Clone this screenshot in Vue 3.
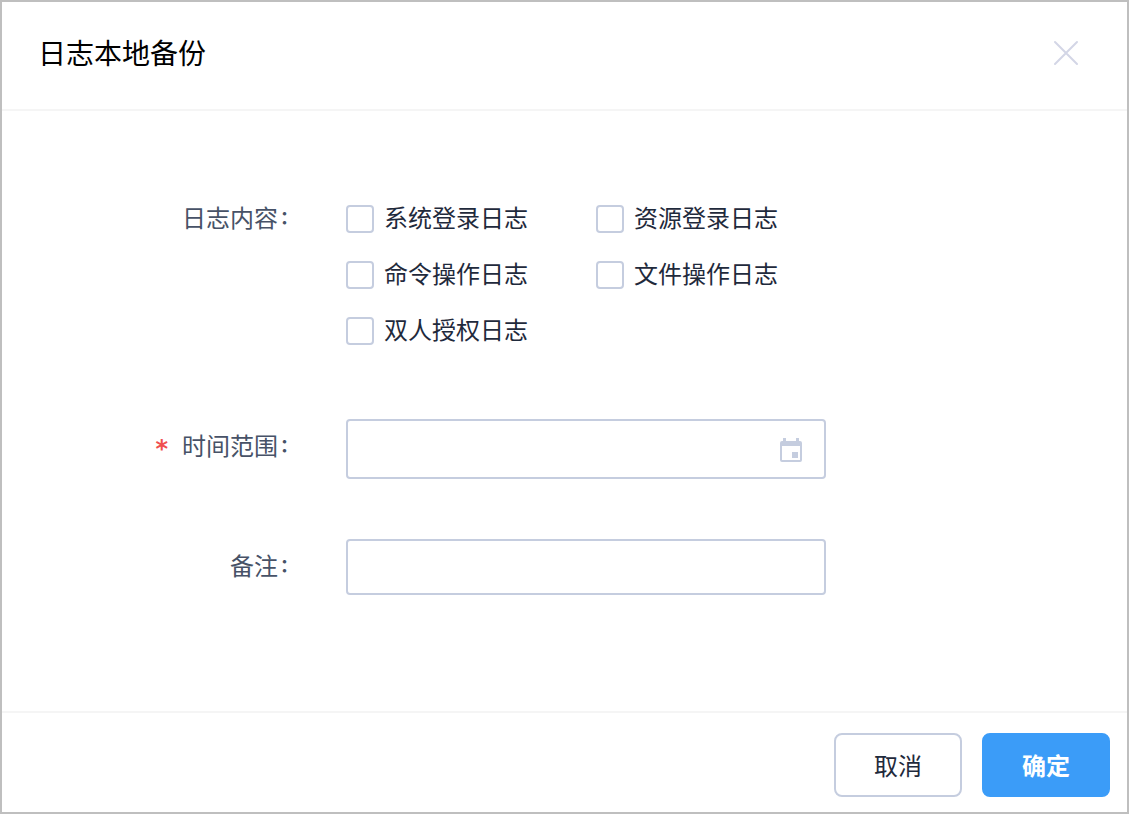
<script setup>
import { ref } from 'vue'

const logTypes = ['系统登录日志', '资源登录日志', '命令操作日志', '文件操作日志', '双人授权日志']
const selected = ref([])
const range = ref('')
const remark = ref('')
</script>

<template>
  <form class="dialog" role="dialog" aria-labelledby="dialog-title" @submit.prevent>
    <header class="header">
      <h1 id="dialog-title" class="title">日志本地备份</h1>
      <button class="close" type="button" aria-label="关闭">
        <svg width="26" height="26" viewBox="0 0 26 26" fill="none" stroke="#d3d6e6" stroke-width="2" stroke-linecap="round">
          <path d="M2 2 24 24M24 2 2 24" />
        </svg>
      </button>
    </header>

    <main class="body">
      <div class="row logs" role="group" aria-labelledby="logs-label">
        <span id="logs-label" class="label">日志内容<span class="colon">：</span></span>
        <div class="options">
          <label v-for="name in logTypes" :key="name" class="option">
            <input v-model="selected" class="check" type="checkbox" :value="name" />
            <span class="option-name">{{ name }}</span>
          </label>
        </div>
      </div>

      <div class="row time">
        <label class="label" for="range"><span class="required">*</span>时间范围<span class="colon">：</span></label>
        <div class="field">
          <input id="range" v-model="range" class="input tall" type="text" required />
          <svg class="calendar" width="22" height="24" viewBox="0 0 22 24" fill="#c5cddf" aria-hidden="true">
            <path fill-rule="evenodd" d="M3 0h3v3h10V0h3v3h1a2 2 0 0 1 2 2v17a2 2 0 0 1-2 2H2a2 2 0 0 1-2-2V5a2 2 0 0 1 2-2h1zM2 8v14h18V8z" />
            <path d="M12 14h6v6h-6z" />
          </svg>
        </div>
      </div>

      <div class="row">
        <label class="label" for="remark">备注<span class="colon">：</span></label>
        <div class="field">
          <input id="remark" v-model="remark" class="input" type="text" />
        </div>
      </div>
    </main>

    <footer class="footer">
      <button class="btn" type="button">取消</button>
      <button class="btn primary" type="submit">确定</button>
    </footer>
  </form>
</template>

<style>
body {
  margin: 0;
  background: #fff;
}
</style>

<style scoped>
.dialog,
.dialog * {
  box-sizing: border-box;
}
.dialog {
  display: flex;
  flex-direction: column;
  min-height: 100vh;
  border: 2px solid #bfbfbf;
  background: #fff;
  color: #1f2a3c;
  font-family: "Noto Sans CJK SC", sans-serif;
  font-size: 24px;
  line-height: 28px;
}
.header {
  display: flex;
  align-items: flex-start;
  justify-content: space-between;
  padding: 30px 48px 35px 36px;
  border-bottom: 2px solid #f5f5f5;
}
.title {
  margin: 0;
  color: #000;
  font-size: 28px;
  font-weight: 400;
  line-height: 40px;
}
.close {
  display: flex;
  padding: 8px 0;
  border: 0;
  background: none;
  cursor: pointer;
}
.body {
  flex: 1;
  padding: 92px 48px 60px 0;
}
.row {
  display: flex;
  align-items: flex-start;
}
.label {
  flex: none;
  width: 344px;
  padding: 12px 44px 0 0;
  color: #475267;
  text-align: right;
  white-space: nowrap;
}
.logs .label {
  padding-top: 0;
}
.colon {
  display: inline-block;
  width: 24px;
  padding-left: 2px;
  font-size: 18px;
  font-weight: 700;
  line-height: 18px;
  text-align: left;
  vertical-align: 3px;
}
.required {
  margin-right: 14px;
  color: #f04f4f;
  font-family: "DejaVu Sans", sans-serif;
  font-weight: 700;
  line-height: 24px;
  vertical-align: -2px;
}
.options {
  display: grid;
  grid-template-columns: repeat(2, 250px);
  row-gap: 24px;
}
.option {
  display: flex;
  align-items: center;
  gap: 10px;
  cursor: pointer;
}
.option-name {
  padding-bottom: 4px;
}
.check {
  appearance: none;
  width: 28px;
  height: 28px;
  margin: 0;
  border: 2px solid #c5cddf;
  border-radius: 4px;
  background: #fff;
}
.check:checked {
  border-color: #3b9cf8;
  background: #3b9cf8;
}
.time {
  margin: 72px 0 60px;
}
.field {
  position: relative;
  flex: 0 1 480px;
}
.input {
  display: block;
  width: 100%;
  height: 56px;
  padding: 0 20px;
  border: 2px solid #c5cddf;
  border-radius: 4px;
  background: #fff;
  color: inherit;
  font: inherit;
}
.tall {
  height: 60px;
  padding-right: 60px;
}
.calendar {
  position: absolute;
  top: 19px;
  right: 24px;
}
.footer {
  display: flex;
  justify-content: flex-end;
  gap: 20px;
  padding: 20px 17px 15px;
  border-top: 2px solid #f5f5f5;
}
.btn {
  width: 128px;
  height: 64px;
  padding: 0;
  border: 2px solid #c5cddf;
  border-radius: 8px;
  background: #fff;
  color: inherit;
  font: inherit;
  cursor: pointer;
}
.primary {
  border-color: #3b9cf8;
  background: #3b9cf8;
  color: #fff;
  font-weight: 700;
}
</style>
